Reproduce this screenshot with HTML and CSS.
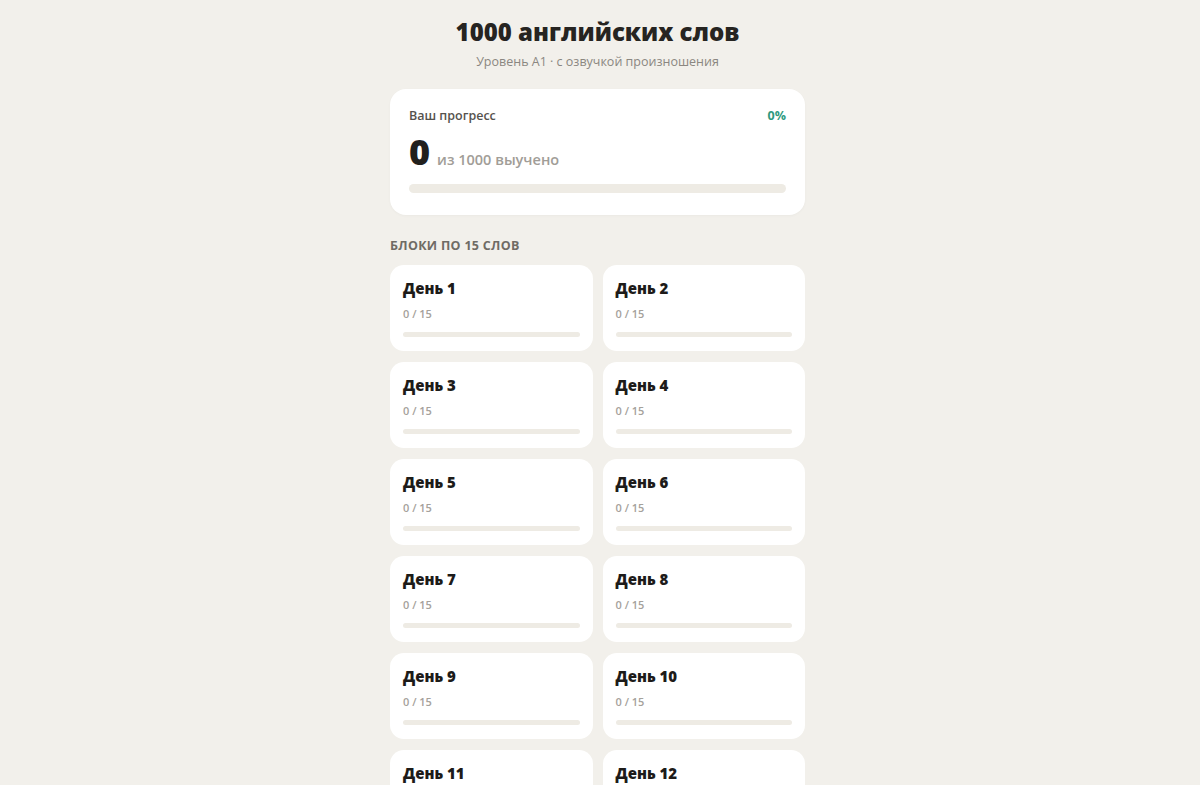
FILE: index.html
```html
<!DOCTYPE html>
<html lang="ru">
<head>
    <meta charset="UTF-8">
    <meta name="viewport" content="width=device-width, initial-scale=1.0">
    <title>1000 английских слов</title>
    <link rel="stylesheet" href="styles.css">
</head>
<body>

<div class="app">
    <h1 class="title">1000 английских слов</h1>
    <p class="subtitle">Уровень А1 · с озвучкой произношения</p>

    <div class="progress-card">
        <div class="progress-head">
            <span class="progress-label">Ваш прогресс</span>
            <span class="progress-percent">0%</span>
        </div>
        <div class="progress-count">
            <span class="count-num">0</span>
            <span class="count-text">из 1000 выучено</span>
        </div>
        <div class="bar big"><div class="bar-fill" style="width: 0%"></div></div>
    </div>

    <div class="section-label">Блоки по 15 слов</div>

    <div class="days" id="days"></div>
</div>

<script>
    const days = document.getElementById('days');
    for (let i = 1; i <= 14; i++) {
        const card = document.createElement('div');
        card.className = 'day-card';
        card.innerHTML =
            '<div class="day-title">День ' + i + '</div>' +
            '<div class="day-count">0 / 15</div>' +
            '<div class="bar small"><div class="bar-fill" style="width: 0%"></div></div>';
        days.appendChild(card);
    }
</script>

</body>
</html>
```

FILE: styles.css
```css
body {
    margin: 0;
    background-color: #f2f0eb;
    font-family: "Open Sans", "Noto Sans", Arial, sans-serif;
    color: #222;
}
.app {
    width: 415px;
    margin-left: calc(50% - 210px);
    padding: 16px 0 40px;
}
.title {
    margin: 0;
    text-align: center;
    font-size: 24px;
    font-weight: 800;
    line-height: 32px;
    color: #262421;
}
.subtitle {
    margin: 5px 0 0;
    text-align: center;
    font-size: 12.5px;
    line-height: 18px;
    color: #8b8781;
}
.progress-card {
    margin-top: 18px;
    background-color: #ffffff;
    border-radius: 16px;
    padding: 18px 19px 22px;
    box-shadow: 0 1px 3px rgba(0, 0, 0, 0.03);
}
.progress-head {
    display: flex;
    justify-content: space-between;
    align-items: center;
    font-size: 12.5px;
    font-weight: 600;
    line-height: 18px;
}
.progress-label {
    color: #55524d;
}
.progress-percent {
    color: #2e9a7e;
    font-weight: 700;
}
.progress-count {
    display: flex;
    align-items: baseline;
    gap: 7px;
    margin-top: 5px;
}
.count-num {
    font-size: 36px;
    font-weight: 800;
    line-height: 44px;
    color: #22201d;
}
.count-text {
    font-size: 14.5px;
    font-weight: 600;
    color: #a19d97;
}
.bar {
    background-color: #eeebe4;
    border-radius: 10px;
    overflow: hidden;
}
.bar.big {
    height: 9px;
    margin-top: 10px;
}
.bar.small {
    height: 5px;
    margin-top: 11px;
}
.bar-fill {
    height: 100%;
    background-color: #2e9a7e;
}
.section-label {
    margin-top: 22px;
    font-size: 12.5px;
    font-weight: 700;
    letter-spacing: 0.3px;
    text-transform: uppercase;
    color: #6f6b65;
    line-height: 18px;
}
.days {
    display: grid;
    grid-template-columns: repeat(2, 1fr);
    gap: 11px 10px;
    margin-top: 10px;
}
.day-card {
    background-color: #ffffff;
    border-radius: 14px;
    padding: 13px 13px 13px;
    height: 86px;
    box-sizing: border-box;
}
.day-title {
    font-size: 15px;
    font-weight: 800;
    line-height: 20px;
    color: #1d1b19;
}
.day-count {
    margin-top: 9px;
    font-size: 11px;
    font-weight: 600;
    line-height: 14px;
    color: #a5a19b;
}
```
